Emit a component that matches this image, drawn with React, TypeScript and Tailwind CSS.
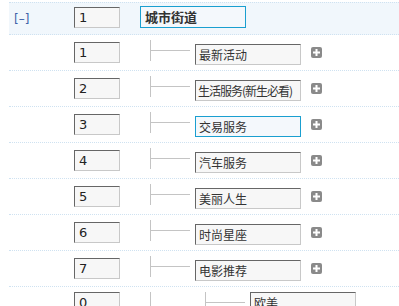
import React from "react";

type Item = { no: string; name: string; focused?: boolean; level?: number };

const items: Item[] = [
  { no: "1", name: "最新活动" },
  { no: "2", name: "生活服务(新生必看)" },
  { no: "3", name: "交易服务", focused: true },
  { no: "4", name: "汽车服务" },
  { no: "5", name: "美丽人生" },
  { no: "6", name: "时尚星座" },
  { no: "7", name: "电影推荐" },
  { no: "0", name: "欧美", level: 2 },
];

const numFont = { fontFamily: '"DejaVu Sans", Verdana, sans-serif' };
const cjkFont = { fontFamily: '"Noto Sans CJK SC", "Liberation Sans", sans-serif' };

function PlusIcon() {
  return (
    <svg width="11" height="11" viewBox="0 0 11 11" className="shrink-0">
      <rect width="11" height="11" rx="2" fill="#8a8a8a" />
      <path d="M5.5 2v7M2 5.5h7" stroke="#fff" strokeWidth="2" />
    </svg>
  );
}

function NumberBox({ value, className = "" }: { value: string; className?: string }) {
  return (
    <div
      className={`w-[46px] h-[21px] shrink-0 border border-t-[#666] border-l-[#666] border-r-[#c8c8c8] border-b-[#c8c8c8] bg-[#f7f7f7] pl-[4px] text-[13px] leading-[19px] text-[#222] ${className}`}
      style={numFont}
    >
      {value}
    </div>
  );
}

function NameBox({ value, focused, className = "" }: { value: string; focused?: boolean; className?: string }) {
  const long = value.length > 6;
  return (
    <div
      className={`w-[106px] h-[21px] shrink-0 border text-[12px] leading-[19px] text-[#333] whitespace-nowrap overflow-hidden ${
        long ? "pl-[2px] tracking-[-1px]" : "pl-[3px]"
      } ${
        focused
          ? "border-[#1a9fd0] bg-[#f4f8fc]"
          : "border-t-[#666] border-l-[#666] border-r-[#c8c8c8] border-b-[#c8c8c8] bg-[#f7f7f7]"
      } ${className}`}
      style={cjkFont}
    >
      {value}
    </div>
  );
}

function Branch({ className = "" }: { className?: string }) {
  return (
    <div className={`w-[40px] h-[21px] shrink-0 border-l border-[#c4c4c4] ${className}`}>
      <div className="h-[11px] border-b border-[#c4c4c4]" />
    </div>
  );
}

export default function App() {
  return (
    <div className="w-[399px] h-[306px] overflow-hidden bg-white pt-[2px] pl-[9px]">
      <div className="h-[33px] flex items-start border-y border-dotted border-[#cfe2f1] bg-[#f1f7fc]">
        <div className="w-[65px] shrink-0 pl-[5px] pt-[9px] text-[12px] leading-[14px] text-[#3d62a8]" style={numFont}>
          [–]
        </div>
        <NumberBox value="1" className="mt-[4px]" />
        <div
          className="ml-[20px] mt-[3px] w-[106px] h-[22px] border border-[#1a9fd0] bg-[#f4f8fc] pl-[4px] text-[13px] leading-[20px] font-bold text-[#333]"
          style={cjkFont}
        >
          城市街道
        </div>
      </div>
      {items.map((item) => (
        <div key={item.no + item.name} className="h-[36px] flex items-start border-b border-dotted border-[#cfe2f1]">
          <div className="w-[65px] shrink-0" />
          {item.level === 2 ? (
            <>
              <NumberBox value={item.no} className="mt-[5px]" />
              <div className="w-[10px] shrink-0 ml-[20px]" />
              <div className="w-[55px] h-[21px] shrink-0 mt-[5px] border-l border-[#c4c4c4]" />
              <Branch className="mt-[5px]" />
              <NameBox value={item.name} className="ml-[5px] mt-[5px]" />
            </>
          ) : (
            <>
              <NumberBox value={item.no} className="mt-[7px]" />
              <Branch className="ml-[30px] mt-[5px]" />
              <NameBox value={item.name} focused={item.focused} className="ml-[5px] mt-[9px]" />
              <div className="ml-[10px] mt-[12px]">
                <PlusIcon />
              </div>
            </>
          )}
        </div>
      ))}
    </div>
  );
}
